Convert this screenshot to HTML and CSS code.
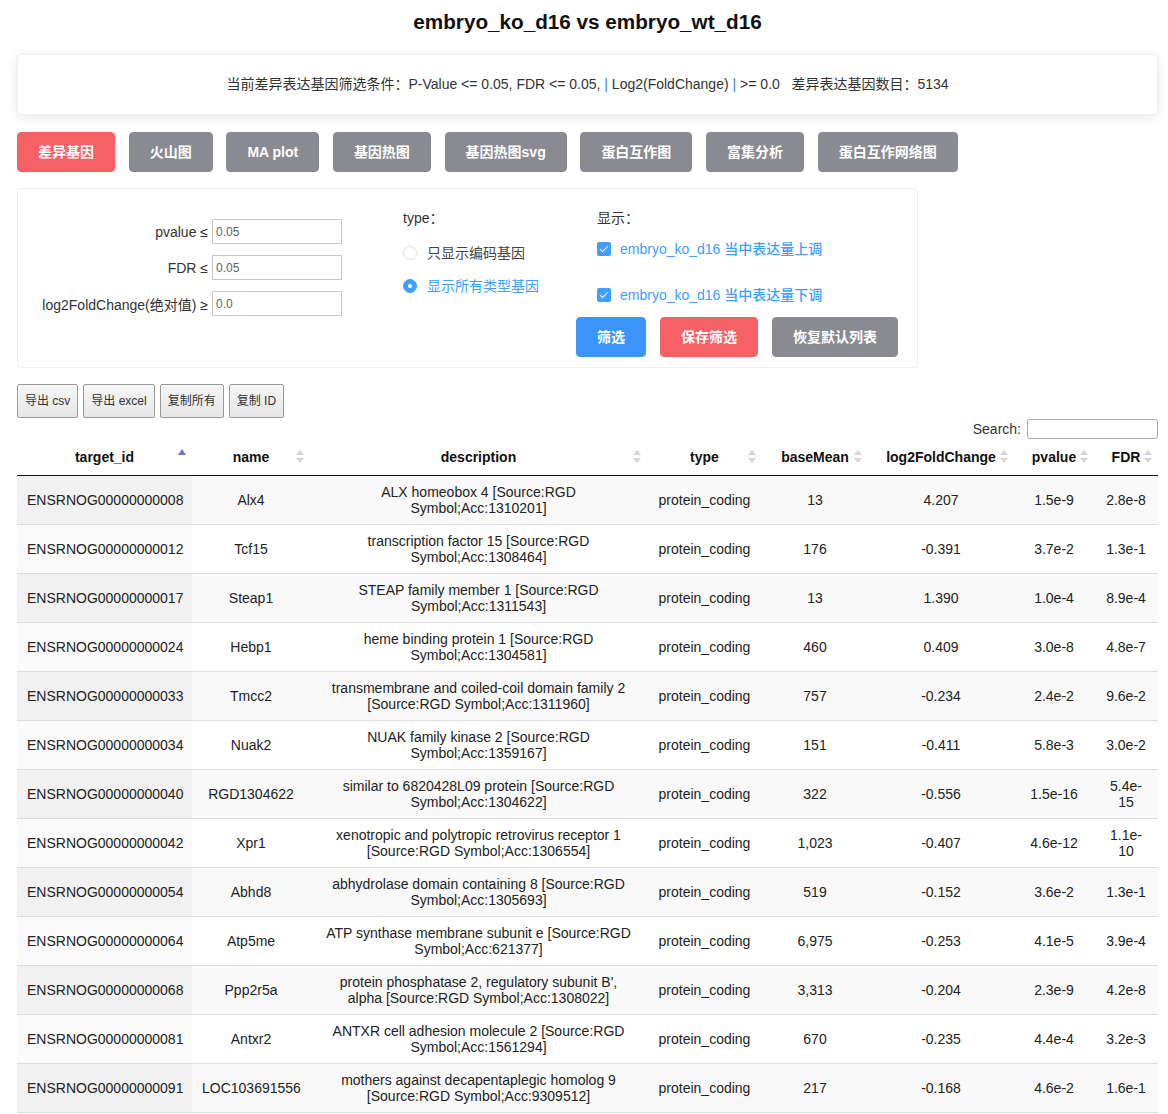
FILE: index.html
```html
<!DOCTYPE html>
<html lang="zh">
<head>
<meta charset="utf-8">
<title>embryo_ko_d16 vs embryo_wt_d16</title>
<link rel="stylesheet" href="styles.css">
</head>
<body>
<div class="page">
  <h1 class="title">embryo_ko_d16 vs embryo_wt_d16</h1>

  <div class="info-card">当前差异表达基因筛选条件：P-Value &lt;= 0.05, FDR &lt;= 0.05, <span class="pipe">|</span> Log2(FoldChange) <span class="pipe">|</span> &gt;= 0.0&nbsp;&nbsp;&nbsp;差异表达基因数目：5134</div>

  <div class="tabs">
    <button class="btn btn-danger">差异基因</button>
    <button class="btn btn-info">火山图</button>
    <button class="btn btn-info">MA plot</button>
    <button class="btn btn-info">基因热图</button>
    <button class="btn btn-info">基因热图svg</button>
    <button class="btn btn-info">蛋白互作图</button>
    <button class="btn btn-info">富集分析</button>
    <button class="btn btn-info">蛋白互作网络图</button>
  </div>

  <div class="filter-panel">
    <div class="form-col">
      <div class="form-row"><label class="form-label">pvalue ≤</label><input class="form-input" value="0.05"></div>
      <div class="form-row"><label class="form-label">FDR ≤</label><input class="form-input" value="0.05"></div>
      <div class="form-row"><label class="form-label">log2FoldChange(绝对值) ≥</label><input class="form-input" value="0.0"></div>
    </div>
    <div class="type-col">
      <div class="col-title">type：</div>
      <div class="radio radio-1"><span class="radio-dot"></span><span class="radio-text">只显示编码基因</span></div>
      <div class="radio radio-2 is-checked"><span class="radio-dot"></span><span class="radio-text">显示所有类型基因</span></div>
    </div>
    <div class="show-col">
      <div class="col-title show-title">显示：</div>
      <div class="check check-1"><span class="check-box"></span><span class="check-text">embryo_ko_d16 当中表达量上调</span></div>
      <div class="check check-2"><span class="check-box"></span><span class="check-text">embryo_ko_d16 当中表达量下调</span></div>
      <div class="action-row">
        <button class="btn btn-primary">筛选</button>
        <button class="btn btn-danger">保存筛选</button>
        <button class="btn btn-info">恢复默认列表</button>
      </div>
    </div>
  </div>

  <div class="dt-buttons">
    <button class="dt-button">导出 csv</button>
    <button class="dt-button">导出 excel</button>
    <button class="dt-button">复制所有</button>
    <button class="dt-button">复制 ID</button>
  </div>

  <div class="dt-filter"><label>Search:</label><input class="search-input"></div>

  <table class="data-table">
    <colgroup>
      <col class="w1"><col class="w2"><col class="w3"><col class="w4"><col class="w5"><col class="w6"><col class="w7"><col class="w8">
    </colgroup>
    <thead>
      <tr>
        <th class="sort-asc">target_id</th>
        <th class="sort-both">name</th>
        <th class="sort-both">description</th>
        <th class="sort-both">type</th>
        <th class="sort-both">baseMean</th>
        <th class="sort-both">log2FoldChange</th>
        <th class="sort-both">pvalue</th>
        <th class="sort-both">FDR</th>
      </tr>
    </thead>
    <tbody>
      <tr class="odd"><td class="sorted">ENSRNOG00000000008</td><td>Alx4</td><td class="desc">ALX homeobox 4 [Source:RGD Symbol;Acc:1310201]</td><td>protein_coding</td><td>13</td><td>4.207</td><td>1.5e-9</td><td>2.8e-8</td></tr>
      <tr class="even"><td class="sorted">ENSRNOG00000000012</td><td>Tcf15</td><td class="desc">transcription factor 15 [Source:RGD Symbol;Acc:1308464]</td><td>protein_coding</td><td>176</td><td>-0.391</td><td>3.7e-2</td><td>1.3e-1</td></tr>
      <tr class="odd"><td class="sorted">ENSRNOG00000000017</td><td>Steap1</td><td class="desc">STEAP family member 1 [Source:RGD Symbol;Acc:1311543]</td><td>protein_coding</td><td>13</td><td>1.390</td><td>1.0e-4</td><td>8.9e-4</td></tr>
      <tr class="even"><td class="sorted">ENSRNOG00000000024</td><td>Hebp1</td><td class="desc">heme binding protein 1 [Source:RGD Symbol;Acc:1304581]</td><td>protein_coding</td><td>460</td><td>0.409</td><td>3.0e-8</td><td>4.8e-7</td></tr>
      <tr class="odd"><td class="sorted">ENSRNOG00000000033</td><td>Tmcc2</td><td class="desc">transmembrane and coiled-coil domain family 2 [Source:RGD Symbol;Acc:1311960]</td><td>protein_coding</td><td>757</td><td>-0.234</td><td>2.4e-2</td><td>9.6e-2</td></tr>
      <tr class="even"><td class="sorted">ENSRNOG00000000034</td><td>Nuak2</td><td class="desc">NUAK family kinase 2 [Source:RGD Symbol;Acc:1359167]</td><td>protein_coding</td><td>151</td><td>-0.411</td><td>5.8e-3</td><td>3.0e-2</td></tr>
      <tr class="odd"><td class="sorted">ENSRNOG00000000040</td><td>RGD1304622</td><td class="desc">similar to 6820428L09 protein [Source:RGD Symbol;Acc:1304622]</td><td>protein_coding</td><td>322</td><td>-0.556</td><td>1.5e-16</td><td>5.4e-<wbr>15</td></tr>
      <tr class="even"><td class="sorted">ENSRNOG00000000042</td><td>Xpr1</td><td class="desc">xenotropic and polytropic retrovirus receptor 1 [Source:RGD Symbol;Acc:1306554]</td><td>protein_coding</td><td>1,023</td><td>-0.407</td><td>4.6e-12</td><td>1.1e-<wbr>10</td></tr>
      <tr class="odd"><td class="sorted">ENSRNOG00000000054</td><td>Abhd8</td><td class="desc">abhydrolase domain containing 8 [Source:RGD Symbol;Acc:1305693]</td><td>protein_coding</td><td>519</td><td>-0.152</td><td>3.6e-2</td><td>1.3e-1</td></tr>
      <tr class="even"><td class="sorted">ENSRNOG00000000064</td><td>Atp5me</td><td class="desc">ATP synthase membrane subunit e [Source:RGD Symbol;Acc:621377]</td><td>protein_coding</td><td>6,975</td><td>-0.253</td><td>4.1e-5</td><td>3.9e-4</td></tr>
      <tr class="odd"><td class="sorted">ENSRNOG00000000068</td><td>Ppp2r5a</td><td class="desc">protein phosphatase 2, regulatory subunit B', alpha [Source:RGD Symbol;Acc:1308022]</td><td>protein_coding</td><td>3,313</td><td>-0.204</td><td>2.3e-9</td><td>4.2e-8</td></tr>
      <tr class="even"><td class="sorted">ENSRNOG00000000081</td><td>Antxr2</td><td class="desc">ANTXR cell adhesion molecule 2 [Source:RGD Symbol;Acc:1561294]</td><td>protein_coding</td><td>670</td><td>-0.235</td><td>4.4e-4</td><td>3.2e-3</td></tr>
      <tr class="odd"><td class="sorted">ENSRNOG00000000091</td><td>LOC103691556</td><td class="desc">mothers against decapentaplegic homolog 9 [Source:RGD Symbol;Acc:9309512]</td><td>protein_coding</td><td>217</td><td>-0.168</td><td>4.6e-2</td><td>1.6e-1</td></tr>
    </tbody>
  </table>
</div>
</body>
</html>
```
FILE: styles.css
```css
* { box-sizing: border-box; }

html, body {
  margin: 0;
  padding: 0;
  background: #fff;
}

body {
  font-family: "Liberation Sans", "Noto Sans CJK SC", sans-serif;
  font-size: 14px;
  color: #333;
}

.page {
  width: 1141px;
  margin-left: 17px;
  padding-top: 10px;
}

.title {
  margin: 0;
  font-size: 20.7px;
  line-height: 24px;
  font-weight: bold;
  text-align: center;
  color: #111;
}

.info-card {
  margin-top: 20px;
  border: 1px solid #ebeef5;
  border-radius: 4px;
  box-shadow: 0 2px 12px 0 rgba(0, 0, 0, 0.1);
  padding: 20px;
  line-height: 19px;
  font-size: 14px;
  text-align: center;
  color: #333;
  background: #fff;
}

.pipe { color: #3a7fd0; }

.tabs {
  margin-top: 17px;
  display: flex;
  gap: 13.7px;
}

.btn {
  font-family: "Liberation Sans", "Noto Sans CJK SC", sans-serif;
  font-size: 14px;
  font-weight: bold;
  line-height: 14px;
  padding: 12px 20px;
  border-radius: 4px;
  border: 1px solid transparent;
  color: #fff;
  cursor: pointer;
  white-space: nowrap;
}

.btn-danger { background: #f56165; border-color: #f56165; }
.btn-info { background: #898b91; border-color: #898b91; }
.btn-primary { background: #3c95fb; border-color: #3c95fb; }

.filter-panel {
  margin-top: 16px;
  width: 901px;
  border: 1px solid #ebeef5;
  border-radius: 4px;
  padding: 10px;
  display: flex;
}

.form-col {
  width: 375px;
  padding-top: 20px;
}

.form-row {
  display: flex;
  align-items: center;
  height: 25px;
  margin-bottom: 11px;
}

.form-label {
  width: 180px;
  margin-right: 4px;
  text-align: right;
  color: #333;
  font-size: 14px;
  white-space: nowrap;
}

.form-input {
  width: 130px;
  height: 25px;
  border: 1px solid #c8c8c8;
  border-radius: 0;
  padding: 0 3px;
  font-family: "Liberation Sans", sans-serif;
  font-size: 12px;
  color: #606266;
  outline: none;
}

.type-col {
  width: 173px;
}

.col-title {
  margin-top: 9px;
  line-height: 20px;
  color: #333;
}

.radio {
  display: flex;
  align-items: center;
  line-height: 20px;
  height: 20px;
  color: #444;
}

.radio-1 { margin-top: 15px; }
.radio-2 { margin-top: 13px; }

.radio-dot {
  width: 14px;
  height: 14px;
  border-radius: 50%;
  border: 1px solid #dcdfe6;
  background: #fff;
  margin-right: 10px;
  position: relative;
  flex: none;
}

.radio.is-checked .radio-dot {
  background: #409eff;
  border-color: #409eff;
}

.radio.is-checked .radio-dot::after {
  content: "";
  position: absolute;
  width: 4px;
  height: 4px;
  border-radius: 50%;
  background: #fff;
  left: 4px;
  top: 4px;
}

.radio.is-checked .radio-text { color: #409eff; }

.show-col {
  flex: 1;
}

.show-title { padding-left: 21px; }

.check {
  display: flex;
  align-items: center;
  line-height: 20px;
  height: 20px;
  padding-left: 21px;
  color: #409eff;
  font-weight: 500;
}

.check-1 { margin-top: 11px; }
.check-2 { margin-top: 26px; }

.check-box {
  width: 14px;
  height: 14px;
  border-radius: 2px;
  background: #409eff;
  margin-right: 9px;
  position: relative;
  flex: none;
}

.check-box::after {
  content: "";
  position: absolute;
  width: 3px;
  height: 7px;
  left: 5px;
  top: 2px;
  border: 1px solid #fff;
  border-left: 0;
  border-top: 0;
  transform: rotate(45deg);
}

.action-row {
  margin-top: 12px;
  display: flex;
  gap: 14px;
}

.dt-buttons {
  margin-top: 16px;
  display: flex;
  gap: 5px;
}

.dt-button {
  font-family: "Liberation Sans", "Noto Sans CJK SC", sans-serif;
  font-size: 12px;
  line-height: 14px;
  padding: 9px 7px;
  border: 1px solid #9a9a9a;
  border-radius: 2px;
  background: linear-gradient(to bottom, #f6f6f6 0%, #e6e6e6 100%);
  color: #333;
  white-space: nowrap;
}

.dt-filter {
  display: flex;
  justify-content: flex-end;
  align-items: center;
  height: 20px;
  margin-top: 1px;
  color: #333;
}

.search-input {
  width: 131px;
  height: 20px;
  margin-left: 6px;
  border: 1px solid #aaa;
  border-radius: 3px;
  padding: 0 4px;
  outline: none;
}

.data-table {
  width: 1141px;
  table-layout: fixed;
  border-collapse: collapse;
  border-spacing: 0;
  color: #222;
}

.w1 { width: 175px; }
.w2 { width: 118px; }
.w3 { width: 337px; }
.w4 { width: 115px; }
.w5 { width: 106px; }
.w6 { width: 146px; }
.w7 { width: 80px; }
.w8 { width: 64px; }

.data-table th {
  font-weight: bold;
  font-size: 14px;
  line-height: 16px;
  padding: 10px;
  text-align: center;
  border-bottom: 1px solid #111;
  position: relative;
  white-space: nowrap;
  color: #111;
}

.data-table th::before,
.data-table th::after {
  content: "";
  position: absolute;
  right: 6px;
  width: 0;
  height: 0;
  border-left: 4px solid transparent;
  border-right: 4px solid transparent;
}

.data-table th.sort-both::before {
  top: calc(50% - 7px);
  border-bottom: 5px solid #d6d6d6;
}

.data-table th.sort-both::after {
  top: calc(50% + 1px);
  border-top: 5px solid #d6d6d6;
}

.data-table th.sort-asc::before {
  top: calc(50% - 8px);
  border-bottom: 6px solid #7272d4;
}

.data-table th.sort-asc::after {
  display: none;
}

.data-table td {
  font-size: 14px;
  line-height: 16px;
  padding: 8px 10px;
  text-align: center;
  vertical-align: middle;
  border-bottom: 1px solid #ddd;
}

.data-table td.desc {
  padding-left: 12px;
  padding-right: 12px;
}

.data-table tr.odd td { background: #f9f9f9; }
.data-table tr.odd td.sorted { background: #f1f1f1; }
.data-table tr.even td { background: #fff; }
.data-table tr.even td.sorted { background: #fafafa; }
```
